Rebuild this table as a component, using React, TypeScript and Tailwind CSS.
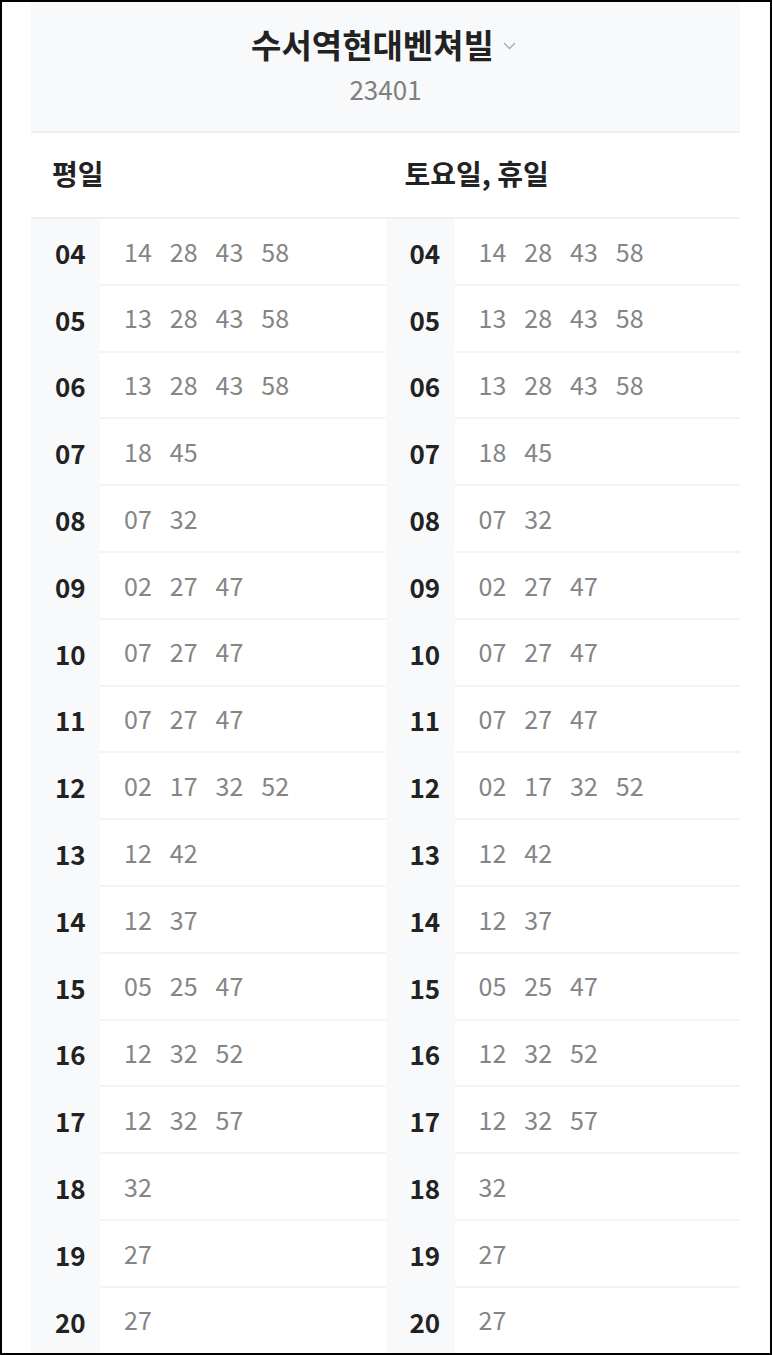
const rows: [string, string[]][] = [
  ["04", ["14", "28", "43", "58"]],
  ["05", ["13", "28", "43", "58"]],
  ["06", ["13", "28", "43", "58"]],
  ["07", ["18", "45"]],
  ["08", ["07", "32"]],
  ["09", ["02", "27", "47"]],
  ["10", ["07", "27", "47"]],
  ["11", ["07", "27", "47"]],
  ["12", ["02", "17", "32", "52"]],
  ["13", ["12", "42"]],
  ["14", ["12", "37"]],
  ["15", ["05", "25", "47"]],
  ["16", ["12", "32", "52"]],
  ["17", ["12", "32", "57"]],
  ["18", ["32"]],
  ["19", ["27"]],
  ["20", ["27"]],
];

function Column({ data }: { data: [string, string[]][] }) {
  return (
    <div className="flex flex-col">
      {data.map(([hour, mins]) => (
        <div key={hour} className="flex h-[66.8px]">
          <div className="w-[69px] shrink-0 bg-[#f8f9fb] pl-[24px] flex items-center text-[26px] font-bold text-[#222]">
            {hour}
          </div>
          <div className="flex-1 border-b-2 border-[#f3f4f6] pl-[24px] flex items-center gap-[18px] text-[25px] text-[#858585]">
            {mins.map((m, i) => (
              <span key={i}>{m}</span>
            ))}
          </div>
        </div>
      ))}
    </div>
  );
}

export default function App() {
  return (
    <div
      className="w-[772px] h-[1355px] border-2 border-black bg-white overflow-hidden"
      style={{ fontFamily: '"Noto Sans CJK KR", "Noto Sans", sans-serif' }}
    >
      <div className="pl-[29px] pr-[30px]">
        <div className="h-[131px] bg-[#f8f9fb] border-b-2 border-[#eef0f2] flex flex-col items-center justify-center">
          <div className="flex items-center mt-[-4px] ml-[-4px]">
            <span className="text-[33px] font-bold text-[#222] leading-[42px]">수서역현대벤쳐빌</span>
            <svg className="ml-[9px] mt-[4px]" width="13" height="8" viewBox="0 0 13 8" fill="none">
              <path d="M1 1l5.5 5.5L12 1" stroke="#aaa" strokeWidth="1.3" />
            </svg>
          </div>
          <div className="text-[26px] text-[#808080] leading-[34px] mt-[7px]">23401</div>
        </div>
        <div className="h-[86px] border-b-2 border-[#eef0f2] grid grid-cols-2 items-center">
          <div className="pl-[21px] text-[28px] font-bold text-[#222] mt-[-4px]">평일</div>
          <div className="pl-[19px] text-[28px] font-bold text-[#222] mt-[-4px]">토요일, 휴일</div>
        </div>
        <div className="grid grid-cols-2">
          <Column data={rows} />
          <Column data={rows} />
        </div>
      </div>
    </div>
  );
}
